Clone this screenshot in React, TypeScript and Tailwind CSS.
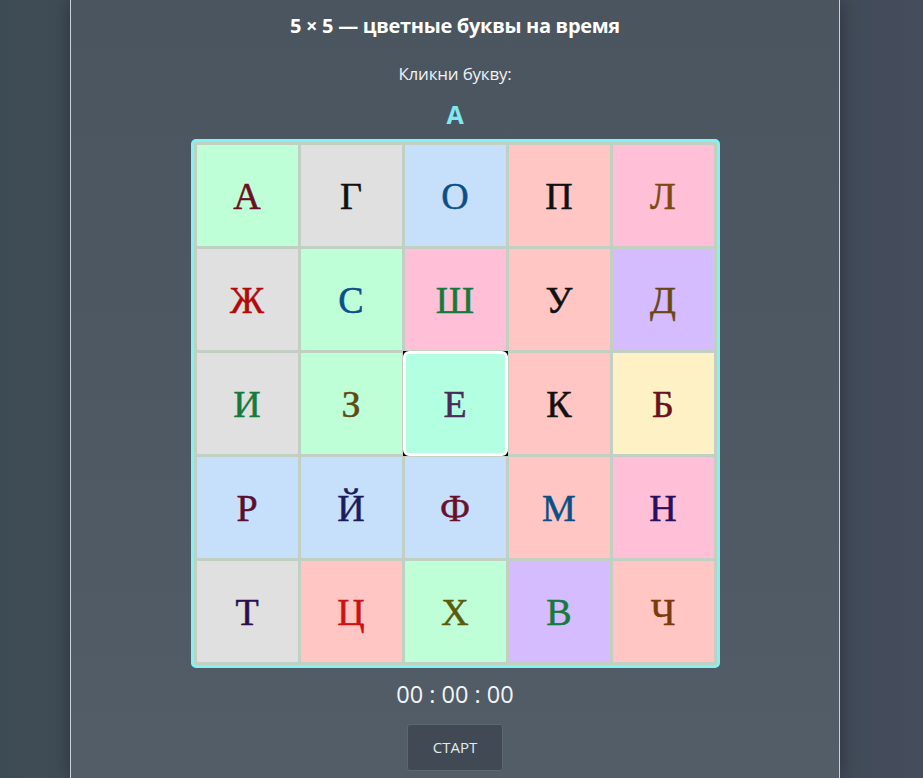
import React from "react";

type Cell = { ch: string; bg: string; fg: string; sel?: boolean };

const cells: Cell[] = [
  { ch: "А", bg: "#bfffd8", fg: "#6a1020" },
  { ch: "Г", bg: "#e0e0e0", fg: "#111111" },
  { ch: "О", bg: "#c6e0fc", fg: "#0c4f86" },
  { ch: "П", bg: "#ffc6c4", fg: "#111111" },
  { ch: "Л", bg: "#ffbfd6", fg: "#7a4a12" },

  { ch: "Ж", bg: "#e0e0e0", fg: "#b00a0a" },
  { ch: "С", bg: "#bfffd8", fg: "#0c4f86" },
  { ch: "Ш", bg: "#ffbfd6", fg: "#137a3c" },
  { ch: "У", bg: "#ffc6c4", fg: "#111111" },
  { ch: "Д", bg: "#d5bbff", fg: "#6a4612" },

  { ch: "И", bg: "#e0e0e0", fg: "#167a3a" },
  { ch: "З", bg: "#bfffd8", fg: "#5c4a10" },
  { ch: "Е", bg: "#b2ffe2", fg: "#4a2a58", sel: true },
  { ch: "К", bg: "#ffc6c4", fg: "#111111" },
  { ch: "Б", bg: "#fff1c6", fg: "#6a1020" },

  { ch: "Р", bg: "#c6e0fc", fg: "#5a0f2c" },
  { ch: "Й", bg: "#c6e0fc", fg: "#1c1c5c" },
  { ch: "Ф", bg: "#c6e0fc", fg: "#6a0f2a" },
  { ch: "М", bg: "#ffc6c4", fg: "#0c4f86" },
  { ch: "Н", bg: "#ffbfd6", fg: "#2a0f5c" },

  { ch: "Т", bg: "#e0e0e0", fg: "#2a0f4c" },
  { ch: "Ц", bg: "#ffc6c4", fg: "#cc1212" },
  { ch: "Х", bg: "#bfffd8", fg: "#5c5a0a" },
  { ch: "В", bg: "#d5bbff", fg: "#167a3a" },
  { ch: "Ч", bg: "#ffc6c4", fg: "#7a3a0a" },
];

function Letter({ c }: { c: Cell }) {
  return (
    <span
      className="font-['Liberation_Serif',serif] text-[38px] leading-none [-webkit-text-stroke:0.5px_currentColor]"
      style={{ color: c.fg }}
    >
      {c.ch}
    </span>
  );
}

export default function App() {
  return (
    <div className="min-h-[778px] w-full bg-[linear-gradient(90deg,#3d4b54_0%,#3f4c56_7%,#414b58_90%,#454c5c_100%)] font-['Open_Sans',sans-serif]">
      <div className="ml-[70px] w-[770px] min-h-[778px] border-x border-[#c6d1d8] bg-[linear-gradient(180deg,#4a5560_0%,#4e5964_60%,#535d68_100%)] shadow-[0_0_18px_rgba(0,0,0,0.35)] flex flex-col items-center pt-[13px]">
        <h1 className="text-[20px] leading-[26px] font-bold text-white tracking-[-0.3px]">
          5 × 5 — цветные буквы на время
        </h1>
        <div className="mt-[24px] text-[17px] leading-[22px] font-medium text-[#eef2f4] tracking-[-0.2px]">Кликни букву:</div>
        <div className="mt-[15px] text-[25px] leading-[28px] font-bold text-[#80e8f2]">А</div>
        <div className="mt-[11px] grid grid-cols-5 gap-[3px] p-[3px] bg-[#c2d0c4] border-[3px] border-[#80f4f2] rounded-[5px]">
          {cells.map((c, i) => (
            <div key={i} className="relative w-[101px] h-[101px]">
              {c.sel ? (
                <div className="absolute inset-[-2px] bg-black z-10">
                  <div
                    className="w-full h-full rounded-[6px] border-[3px] border-white flex items-center justify-center"
                    style={{ background: c.bg }}
                  >
                    <Letter c={c} />
                  </div>
                </div>
              ) : (
                <div
                  className="w-full h-full flex items-center justify-center"
                  style={{ background: c.bg }}
                >
                  <Letter c={c} />
                </div>
              )}
            </div>
          ))}
        </div>
        <div className="mt-[10px] text-[23.5px] leading-[32px] text-[#f2f5f7]">00 : 00 : 00</div>
        <button className="mt-[14px] w-[96px] h-[47px] rounded-[3px] border border-[#5d6772] bg-[#414a54] text-[15px] text-[#e4e9ec]">
          СТАРТ
        </button>
      </div>
    </div>
  );
}
